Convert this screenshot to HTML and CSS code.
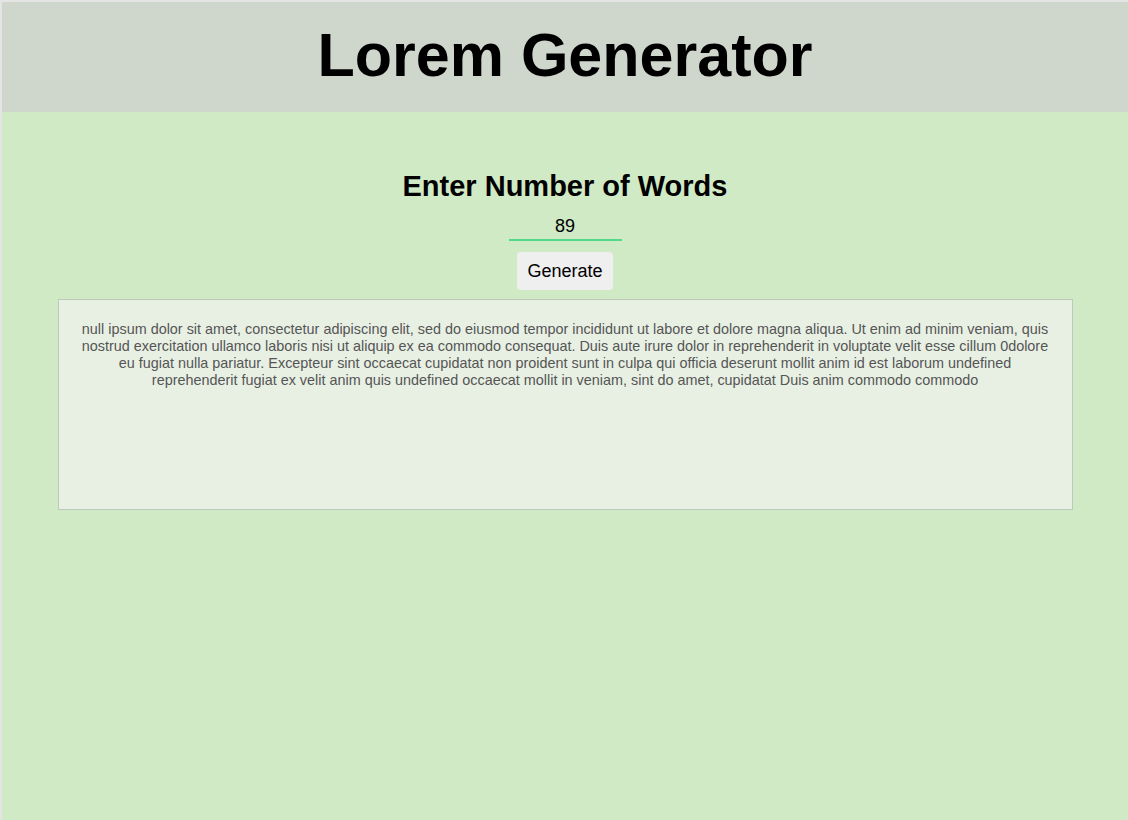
FILE: index.html
```html
<!DOCTYPE html>
<html lang="en">
<head>
<meta charset="utf-8">
<title>Lorem Generator</title>
<link rel="stylesheet" href="styles.css">
</head>
<body>
<div class="page">
  <header class="header">
    <h1 class="title">Lorem Generator</h1>
  </header>
  <main class="main">
    <h2 class="label">Enter Number of Words</h2>
    <input class="count" type="text" value="89">
    <button class="generate" type="button">Generate</button>
    <textarea class="output">null ipsum dolor sit amet, consectetur adipiscing elit, sed do eiusmod tempor incididunt ut labore et dolore magna aliqua. Ut enim ad minim veniam, quis nostrud exercitation ullamco laboris nisi ut aliquip ex ea commodo consequat. Duis aute irure dolor in reprehenderit in voluptate velit esse cillum 0dolore eu fugiat nulla pariatur. Excepteur sint occaecat cupidatat non proident sunt in culpa qui officia deserunt mollit anim id est laborum undefined reprehenderit fugiat ex velit anim quis undefined occaecat mollit in veniam, sint do amet, cupidatat Duis anim commodo commodo</textarea>
  </main>
</div>
</body>
</html>
```

FILE: styles.css
```css
html {
  background: #e4e4e4;
  height: 100%;
}
body {
  margin: 0;
  padding: 2px 0 0 2px;
  height: 100%;
  box-sizing: border-box;
  font-family: "Liberation Sans", Arial, sans-serif;
}
.page {
  background: #cfeac4;
  min-height: 100%;
  display: flex;
  flex-direction: column;
}
.header {
  background: #cfd7cc;
  height: 110px;
  display: flex;
  align-items: center;
  justify-content: center;
}
.title {
  margin: 0;
  font-size: 61px;
  font-weight: bold;
  color: #000;
  line-height: 1;
  padding-bottom: 3px;
}
.main {
  display: flex;
  flex-direction: column;
  align-items: center;
  padding-top: 56px;
}
.label {
  margin: 0;
  font-size: 29px;
  font-weight: bold;
  line-height: 36px;
  color: #000;
}
.count {
  margin-top: 12px;
  width: 113px;
  box-sizing: border-box;
  border: none;
  border-bottom: 2px solid #52d98a;
  background: transparent;
  text-align: center;
  font-family: "Liberation Sans", Arial, sans-serif;
  font-size: 18px;
  color: #000;
  padding: 0 0 3px;
  height: 25px;
  outline: none;
}
.generate {
  margin-top: 11px;
  width: 96px;
  height: 38px;
  border: none;
  border-radius: 4px;
  background: #efefef;
  font-family: "Liberation Sans", Arial, sans-serif;
  font-size: 18px;
  color: #000;
  padding: 0;
}
.output {
  margin-top: 9px;
  width: 1015px;
  height: 211px;
  box-sizing: border-box;
  background: #e8f0e4;
  border: 1px solid #bfc9bb;
  padding: 21px 20px 20px;
  font-family: "Liberation Sans", Arial, sans-serif;
  font-size: 14.4px;
  line-height: 17px;
  color: #555;
  text-align: center;
  resize: none;
}
```
